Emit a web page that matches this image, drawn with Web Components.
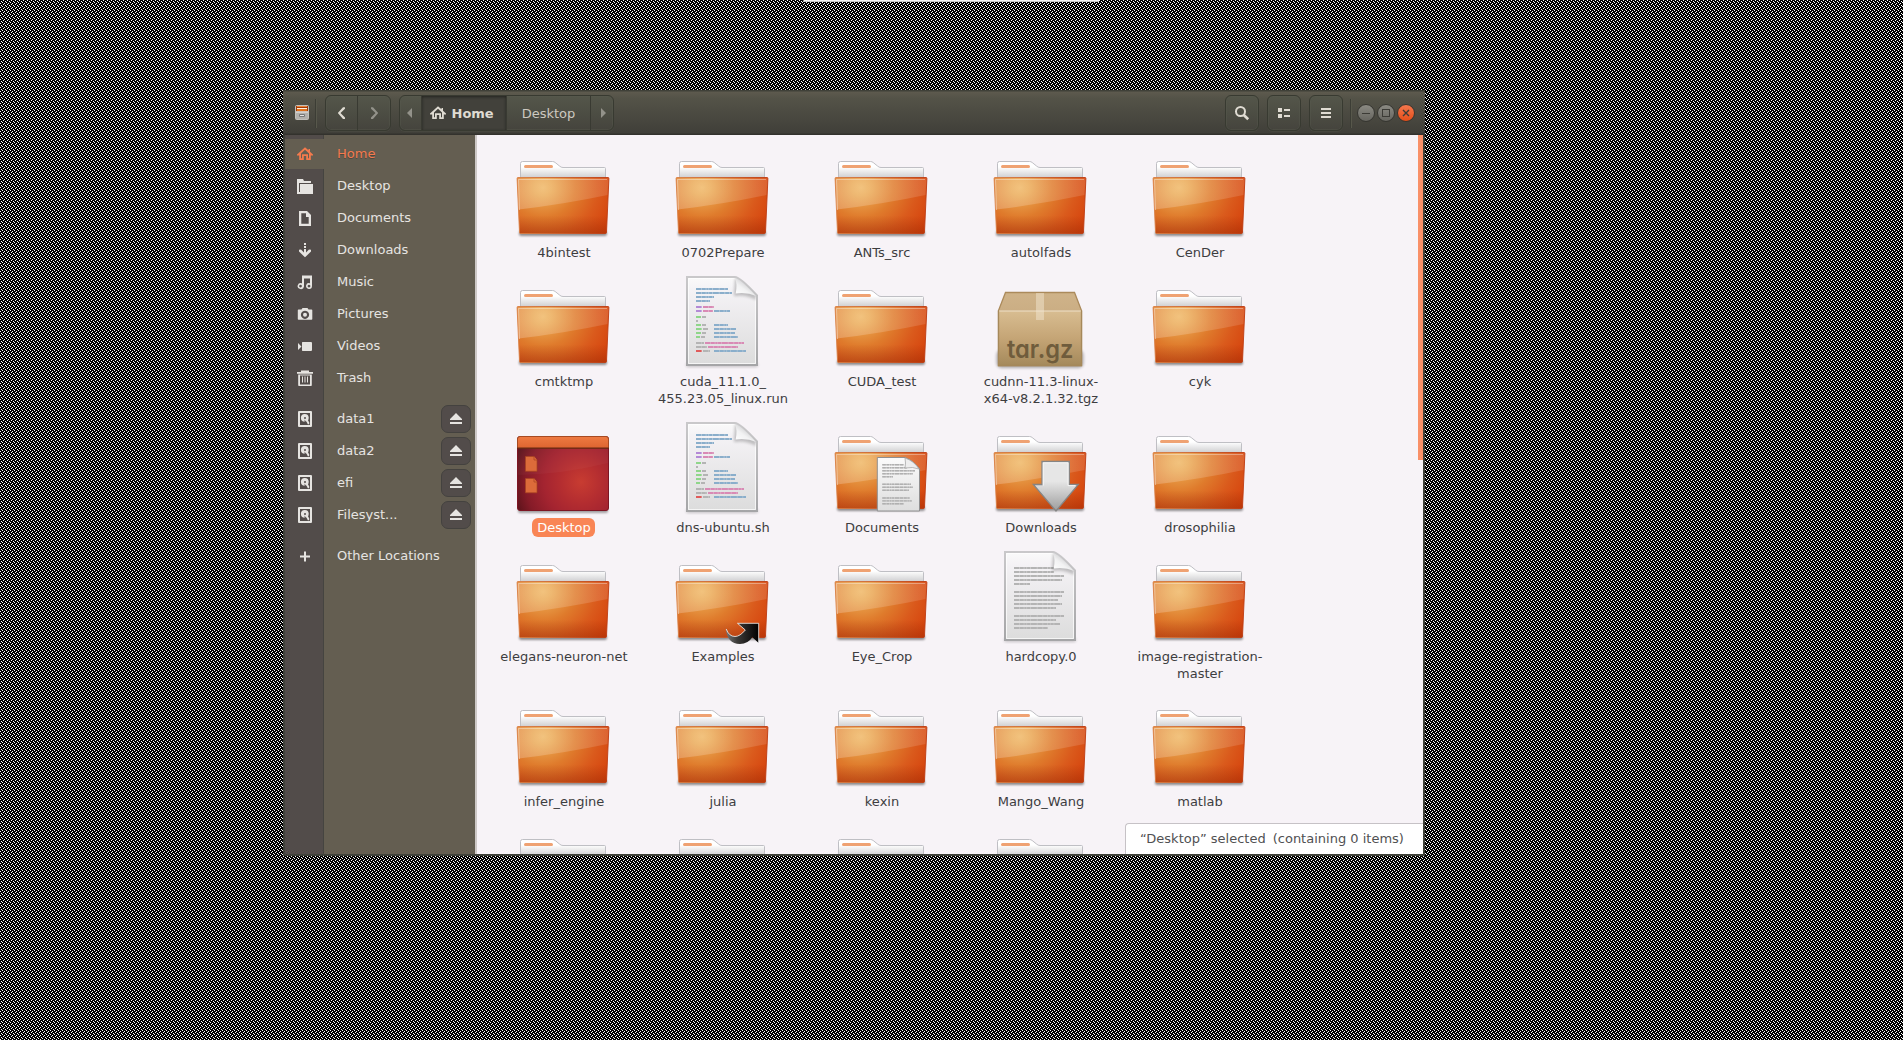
<!DOCTYPE html>
<html lang="en">
<head>
<meta charset="utf-8">
<title>Home</title>
<style>
html,body{margin:0;height:100%;overflow:hidden;background:#000}
body{font:13px/17px "DejaVu Sans",sans-serif}
</style>
</head>
<body>
<x-desktop>
  <file-window>
    <header-bar slot="header"></header-bar>
    <side-bar slot="side">
      <side-row icon="home" selected>Home</side-row>
      <side-row icon="folder">Desktop</side-row>
      <side-row icon="doc">Documents</side-row>
      <side-row icon="down">Downloads</side-row>
      <side-row icon="music">Music</side-row>
      <side-row icon="camera">Pictures</side-row>
      <side-row icon="video">Videos</side-row>
      <side-row icon="trash">Trash</side-row>
      <side-row icon="disk" gap eject>data1</side-row>
      <side-row icon="disk" eject>data2</side-row>
      <side-row icon="disk" eject>efi</side-row>
      <side-row icon="disk" eject>Filesyst...</side-row>
      <side-row icon="plus" gap>Other Locations</side-row>
    </side-bar>
    <file-grid>
      <file-item>4bintest</file-item>
      <file-item>0702Prepare</file-item>
      <file-item>ANTs_src</file-item>
      <file-item>autolfads</file-item>
      <file-item>CenDer</file-item>
      <file-item>cmtktmp</file-item>
      <file-item kind="code">cuda_11.1.0_<br>455.23.05_linux.run</file-item>
      <file-item>CUDA_test</file-item>
      <file-item kind="tar">cudnn-11.3-linux-<br>x64-v8.2.1.32.tgz</file-item>
      <file-item>cyk</file-item>
      <file-item kind="desktop" selected>Desktop</file-item>
      <file-item kind="code">dns-ubuntu.sh</file-item>
      <file-item kind="documents">Documents</file-item>
      <file-item kind="downloads">Downloads</file-item>
      <file-item>drosophilia</file-item>
      <file-item>elegans-neuron-net</file-item>
      <file-item kind="link">Examples</file-item>
      <file-item>Eye_Crop</file-item>
      <file-item kind="text">hardcopy.0</file-item>
      <file-item>image-registration-<br>master</file-item>
      <file-item>infer_engine</file-item>
      <file-item>julia</file-item>
      <file-item>kexin</file-item>
      <file-item>Mango_Wang</file-item>
      <file-item>matlab</file-item>
      <file-item></file-item>
      <file-item></file-item>
      <file-item></file-item>
      <file-item></file-item>
    </file-grid>
    <status-tip slot="status"><span>“Desktop” selected</span><span>(containing 0 items)</span></status-tip>
  </file-window>
</x-desktop>

<script>
const define = (name, html) => customElements.define(name, class extends HTMLElement {
  constructor() { super(); this.attachShadow({mode: 'open'}); }
  connectedCallback() {
    this.shadowRoot.innerHTML = typeof html === 'function' ? html(this) : html;
  }
});

const GLYPHS = {
  home: '<path d="M8 1.200 0 8.400V9.600h2.200v4.500h4.600v-4h2.400v4h4.600V9.600H16V8.400L13 5.700V3.100h-1.500v1.200zM8 3.800l4 3.600v4.900h-1V8.200H5v4.100H4V7.400z" fill-rule="evenodd"/>',
  folder: '<path d="M0 1h6l1 2h7v2H2v9h1V6h13v10H0z"/>',
  doc: '<path d="M2 1h8l4 4v11H2zM4.300 3.200v10.600h7.400V7H9V3.200z" fill-rule="evenodd"/>',
  down: '<path d="M7 1h2v2H7zM7 4h2v2H7zM7 7h2v3.600l3-3 2 .2V9.600l-6 5.700-6-5.700V7.800l2-.2 3 3z"/>',
  music: '<path d="M5 1.500h10v10.500a3 2.900 0 1 1-2-2.700V4.500H7v8a3.200 3 0 1 1-2-3.200zM3.500 10.700a1.400 1.400 0 1 0 .01 0zM12 10.700a1.400 1.400 0 1 0 .01 0z" fill-rule="evenodd"/>',
  camera: '<path d="M1.500 3.500H4.500L5.500 2h5l1 1.500H14.500q.8 0 .8.800V13q0 .8-.8.800h-13Q.8 13.800.8 13V4.300q0-.8.700-.8zM8 4.700a4.100 4.100 0 1 0 .01 0z" fill-rule="evenodd"/><circle cx="8" cy="8.800" r="2"/>',
  video: '<path d="M5.500 4H14q1 0 1 1v7q0 1-1 1H5.500Q5 13 5 12V5q0-1 .5-1zM1 5v7l3.500-3.500z"/>',
  trash: '<path d="M4 .5h8v1.500h4v1.800H0V2h4zM1.200 4.500h13.600V15q0 1.200-1.200 1.200H2.400Q1.200 16.200 1.200 15zM3 5.500v8.900h10V5.500z" fill-rule="evenodd"/><path d="M5 6.500h1v6H5zM7.500 6.500h1v6h-1zM10 6.500h1v6h-1z"/>',
  disk: '<path d="M2 0h12q1 0 1 1v14q0 1-1 1H2q-1 0-1-1V1q0-1 1-1zM3 2v12h10V2z" fill-rule="evenodd"/><circle cx="7.800" cy="6.800" r="3.900"/><path d="M7.600 8.500v3.200l3 1.800z" fill="#524c4a"/><circle cx="8" cy="7" r="1" fill="#524c4a"/><path d="M8.300 8.300l1.600-1 2.300 4.200v1.800h-1.400z"/>',
  plus: '<path d="M7 3.500h2v4h4v2H9v4H7v-4H3v-2h4z"/>',
  eject: '<path d="M8 2l6 6v1H2V8zM2 11h12v2H2z"/>',
  back: '<path d="M9 2.200h2v1.500L6.500 8l4.500 4.400v1.500H9L3.800 8z"/>',
  next: '<path d="M7 2.200H5v1.500L9.500 8 5 12.400v1.500h2L12.200 8z"/>',
  tril: '<path d="M10 3v10L5 8z"/>',
  trir: '<path d="M6 3v10l5-5z"/>',
  search: '<circle cx="6.500" cy="6.500" r="4.500" fill="none" stroke="currentColor" stroke-width="2"/><path d="M9.500 9.700l4.700 4.600" fill="none" stroke="currentColor" stroke-width="2.600"/>',
  list: '<path d="M2 3h4v4H2zM2 9h4v4H2zM8 4h6v2H8zM8 10h6v2H8z"/>',
  menu: '<path d="M3 3h10v2H3zM3 7h10v2H3zM3 11h10v2H3z"/>'
};
define('g-icon', el => `<style>:host{display:block;width:16px;height:16px}svg{display:block}</style>
  <svg width="16" height="16" viewBox="0 0 16 16" fill="currentColor">${GLYPHS[el.getAttribute('name')]}</svg>`);

define('x-desktop', `<style>
  :host{display:block;position:relative;width:1903px;height:1040px;overflow:hidden;background:#000}
  .weave{position:absolute;inset:0;display:block}
  .strip{position:absolute;left:803px;top:0;width:296px;height:2px;background:#f4f4f4;box-sizing:border-box;border-left:1px solid #999;border-bottom:1px solid #c8c8c8}
  ::slotted(file-window){position:absolute;left:283px;top:90px}
  </style>
  <svg class="weave" width="1903" height="1040" shape-rendering="crispEdges"><defs>
    <pattern id="w" width="4" height="4" patternUnits="userSpaceOnUse"><path fill="#fff" d="M3 0h1v1h-1zM1 1h1v1h-1zM2 2h1v1h-1zM0 3h1v1h-1z"/></pattern></defs>
    <rect width="1903" height="1040" fill="url(#w)"/></svg>
  <div class="strip"></div><slot></slot>`);

define('file-window', `<style>
  :host{display:flex;flex-direction:column;width:1142px;height:766px;box-sizing:border-box;background:#40423a}
  .body{display:flex;height:719px;margin:0 2px 2px}
  .view{position:relative;flex:1;overflow:hidden;background:#f7f3f7}
  .scroll{position:absolute;right:0;top:0;width:5px;height:325px;background:#f99068}
  ::slotted(status-tip){position:absolute;right:0;bottom:0}
  </style><slot name="header"></slot>
  <div class="body"><slot name="side"></slot>
    <div class="view"><slot></slot><div class="scroll"></div><slot name="status"></slot></div></div>`);

define('header-bar', `<style>
  :host{display:flex;align-items:center;height:45px;box-sizing:border-box;padding:1px 10px 0 12px;
    background:linear-gradient(#3f4038 0,#3f4038 1px,#5d5a4e 2px,#545348 8px,#403f39 43px,#33322d 44px);color:#dfdbd2}
  .app{display:block;width:14px;height:15px;margin-bottom:1px}
  .sep{width:1px;height:29px;background:#3c3d35;border-right:1px solid #57574b}
  .group{display:flex;height:36px;box-sizing:border-box;border:1px solid #383a31;border-radius:6px;overflow:hidden;
    background:linear-gradient(#54564a,#45443d);box-shadow:0 1px #55564a55, inset 0 0 0 1px #5a5c5055}
  .group>*{display:flex;align-items:center;justify-content:center;box-sizing:border-box}
  .group>*+*{border-left:1px solid #393a32}
  .dim{color:#93928a}
  .group>.home{width:85px;padding-left:8px;gap:5.500px;justify-content:flex-start;font-weight:bold;background:#42413b;box-shadow:inset 0 1px 3px #23231f}
  .win{display:flex;margin-left:5px}
  .win svg{display:block}
  </style>
  <svg class="app" viewBox="0 0 14 15"><rect x=".5" y=".5" width="13" height="14" rx="1" fill="#a9a7a2" stroke="#c2c0bb"/><rect x="1" y="1" width="12" height="5.500" fill="#9c3a0c"/><path d="M2 1.500h10" stroke="#f08030"/><path d="M2 3.500h10" stroke="#fff3e0"/><path d="M2 5h10" stroke="#ff8a20" stroke-width="1.400"/><rect x="1" y="6.500" width="12" height="7.500" fill="#b2b0ac"/><path d="M1 7h12" stroke="#efeeec"/><path d="M4.500 9.500h5v2h-5z" fill="#e4e4e4" stroke="#777"/></svg>
  <div class="sep" style="margin-left:6px"></div>
  <div class="group" style="margin-left:8px"><div style="width:31px"><g-icon name="back"></g-icon></div><div class="dim" style="width:33px"><g-icon name="next"></g-icon></div></div>
  <div class="group" style="margin-left:8px">
    <div class="dim" style="width:21px;padding-right:1px"><g-icon name="tril"></g-icon></div>
    <div class="home"><g-icon name="home"></g-icon><span>Home</span></div>
    <div style="width:84px;color:#cdc9c0">Desktop</div>
    <div class="dim" style="width:23px;padding-left:2px"><g-icon name="trir"></g-icon></div></div>
  <div style="flex:1"></div>
  <div class="group"><div style="width:32px"><g-icon name="search"></g-icon></div></div>
  <div class="group" style="margin-left:8px"><div style="width:32px"><g-icon name="list"></g-icon></div></div>
  <div class="group" style="margin-left:8px"><div style="width:32px"><g-icon name="menu"></g-icon></div></div>
  <div class="sep" style="margin-left:7px"></div>
  <div class="win"><svg width="58" height="18" viewBox="0 0 58 18"><defs>
    <linearGradient id="g" x2="0" y2="1"><stop stop-color="#8c8b84"/><stop offset="1" stop-color="#65645e"/></linearGradient>
    <linearGradient id="o" x2="0" y2="1"><stop stop-color="#f5794f"/><stop offset="1" stop-color="#e24d18"/></linearGradient></defs>
    <g stroke="#34342f"><circle cx="9" cy="9" r="8.500" fill="url(#g)"/><circle cx="29" cy="9" r="8.500" fill="url(#g)"/><circle cx="49" cy="9" r="8.500" fill="url(#o)"/></g>
    <g stroke="#3c3b36" fill="none"><path d="M5 9.500h8"/><rect x="25.500" y="5.500" width="7" height="7"/><path d="M46 6l6 6M52 6l-6 6" stroke-width="1.400"/></g></svg></div>`);

define('side-bar', `<style>
  :host{display:flex;flex-direction:column;flex:none;width:190px;padding-top:3px;box-sizing:content-box;border-right:2px solid #cdc8c6;
    background:linear-gradient(90deg,#524c4a 38px,#454440 38px,#454440 39px,#645e51 39px)}
  </style><slot></slot>`);

define('side-row', el => `<style>
  :host{display:flex;align-items:center;height:32px;color:#e6e4e1}
  :host([gap]){margin-top:9px}
  :host([selected]){color:#f47a4d}
  .ic{display:flex;align-items:center;justify-content:center;width:40px;height:30px}
  :host([selected]) .ic{background:#645e51}
  .t{flex:1;padding:0 0 1px 12px;white-space:nowrap}
  :host([selected]) .t{text-shadow:0 1px #4d473d}
  .ej{display:flex;align-items:center;justify-content:center;width:30px;height:28px;box-sizing:border-box;border:1px solid #44423f;border-radius:7px;background:#524c4a;margin-right:4px}
  </style><div class="ic"><g-icon name="${el.getAttribute('icon')}"></g-icon></div><div class="t"><slot></slot></div>
  ${el.hasAttribute('eject') ? '<div class="ej"><g-icon name="eject"></g-icon></div>' : ''}`);

define('file-grid', `<style>
  :host{display:grid;grid-template-columns:repeat(5,159px);grid-template-rows:129px 146px 129px 145px 129px 129px;padding:9px 0 0 7px;align-items:start}
  </style><slot></slot>`);

const FRONT = 'M3 33.500H93Q94 33.500 93.900 34.500L91.500 88.500Q91.400 89.500 90.400 89.500H5.600Q4.600 89.500 4.500 88.500L2.100 34.500Q2 33.500 3 33.500z';
const FOLDER = `<defs>
  <linearGradient id="bk" x2="0" y2="1"><stop offset=".3" stop-color="#fff"/><stop offset="1" stop-color="#c4c4c6"/></linearGradient>
  <radialGradient id="fr" gradientUnits="userSpaceOnUse" cx="28" cy="44" r="78" gradientTransform="translate(0 4) scale(1 .9)"><stop stop-color="#efb45f"/><stop offset=".12" stop-color="#eaa750"/><stop offset=".42" stop-color="#df7b2c"/><stop offset=".7" stop-color="#da5a1c"/><stop offset="1" stop-color="#d5400b"/></radialGradient>
  <linearGradient id="sh" x2="0" y2="1"><stop offset=".68" stop-color="#8a2a08" stop-opacity="0"/><stop offset="1" stop-color="#8a2a08" stop-opacity=".36"/></linearGradient>
  <linearGradient id="gl" x2="1" y2="0"><stop stop-color="#fff" stop-opacity=".22"/><stop offset="1" stop-color="#fff" stop-opacity=".12"/></linearGradient>
  <linearGradient id="ed" x2="1" y2="0"><stop stop-color="#d98046"/><stop offset="1" stop-color="#bd3a10"/></linearGradient>
  <filter id="bl" x="-10%" width="120%" y="-100%" height="300%"><feGaussianBlur stdDeviation="1.100"/></filter></defs>
  <rect x="4" y="87" width="88" height="5" rx="2" fill="#000" opacity=".42" filter="url(#bl)"/>
  <path d="M5.500 36V19.500Q5.500 17.500 7.500 17.500H37.500Q39 17.500 40.200 18.500L44.500 22Q46 23.500 48 23.500H89.500Q90.500 23.500 90.500 24.500V36z" fill="url(#bk)" stroke="#bfbfc4"/>
  <rect x="9" y="21" width="29" height="3" rx="1.500" fill="#efa272"/>
  <path d="${FRONT}" fill="url(#fr)"/>
  <path d="${FRONT}" fill="url(#sh)" stroke="url(#ed)" stroke-width=".9"/>
  <path d="M3 34.500H93.300L92.500 51Q50 60 3.800 65.500z" fill="url(#gl)"/>
  <path d="M4.500 66L3.500 35.500H92" fill="none" stroke="#fff" stroke-opacity=".35"/>`;

const rows = (list, w) => list.map(([y, x1, x2, c]) =>
  `<path d="M${x1} ${y}H${x2}" stroke="${c}" stroke-width="${w}" opacity=".5"/><path d="M${x1} ${y}H${x2}" stroke="${c}" stroke-width="${w}" stroke-dasharray="${w * 2.500} .7 ${w * 2} .7 ${w} .7 ${w * 1.500} .7 ${w * 3} .7"/>`).join('');

const page = lines => `<defs>
  <linearGradient id="pg" x2="0" y2="1"><stop stop-color="#fafafa"/><stop offset=".15" stop-color="#f4f2f5"/><stop offset="1" stop-color="#dcdcdc"/></linearGradient>
  <linearGradient id="ps" x2="0" y2="1"><stop stop-color="#c9c8ca"/><stop offset="1" stop-color="#a5a5a7"/></linearGradient>
  <linearGradient id="fd" x1="0" y1="1" x2=".6" y2=".3"><stop stop-color="#fff"/><stop offset=".6" stop-color="#f2f2f3"/><stop offset="1" stop-color="#d0d0d2"/></linearGradient>
  <filter id="pb" x="-30%" width="160%" y="-30%" height="160%"><feGaussianBlur stdDeviation="1.600"/></filter><clipPath id="pc"><path d="M13 4H62L83 23V92H13z"/></clipPath></defs>
  <rect x="12" y="90" width="72" height="4" rx="2" fill="#000" opacity=".2" filter="url(#pb)"/>
  <path d="M13 4H61Q66 4 83 22.500V92H13z" fill="url(#pg)"/>
  <path d="M14.500 5.500H60M81.500 24V90.500H14.500V5.500" stroke="#fff" stroke-opacity=".7" fill="none"/>
  ${lines}
  <path d="M61 5L60 23Q72 21 82 27V22z" fill="#000" opacity=".22" filter="url(#pb)" clip-path="url(#pc)"/>
  <path d="M61 4.500Q63.500 11 61.700 20.500Q73 19 82.500 23Q67 5 61 4.500z" fill="url(#fd)"/>
  <path d="M13 4H61Q66 4 83 22.500V92H13z" fill="none" stroke="url(#ps)" stroke-width="2"/>`;

const B = '#8aaecb', P = '#b48ad6', K = '#d98ab5', G = '#8fd68a', S = '#b4b4b4', R = '#e05b5b';
const CODE = rows([[16,22,54,B],[20,22,58,B],[24,22,40,B],[28,22,36,B],[34,22,28,P],[34,29,40,K],[38,22,28,P],[38,29,39,K],[38,40,56,B],
  [44,22,27,G],[44,28,32,S],[48,22,24,S],[52,22,27,G],[52,28,32,S],[52,40,54,B],[56,22,28,G],[56,29,34,S],[56,40,62,B],
  [60,22,27,G],[60,28,32,S],[60,40,61,B],[64,22,26,G],[64,27,31,S],[64,40,64,B],[70,22,30,S],[70,31,70,K],[74,22,33,S],[74,34,64,K],
  [78,22,28,R],[78,29,36,S],[78,40,72,B]], 2);
const TEXT = rows([[20,62],[24,62],[28,72],[32,70],[36,38],[44,72],[48,70],[52,66],[56,70],[60,64],[68,72],[72,64],[76,68],[80,56]].map(([y, x]) => [y, 22, x, S]), 2);

const ART = {
  folder: FOLDER,
  code: page(CODE),
  text: page(TEXT),
  documents: FOLDER + `<defs><linearGradient id="dg" x2="0" y2="1"><stop stop-color="#fbfbfb"/><stop offset="1" stop-color="#dedede"/></linearGradient></defs>
    <path d="M44.300 38.500H72Q81 42 86.500 50V92H44.300z" fill="url(#dg)" stroke="#8f8f90"/>
    ${rows([[45.700,71],[48.700,74],[51.700,82],[54.700,80],[57.700,60],[65.300,78],[68.300,80],[71.300,76],[79,77],[81.900,79],[84.800,71]].map(([y, x]) => [y, 49.300, x, '#b0b0b0']), 1.400)}
    <path d="M72 39Q73 44 72 49Q80 47.500 86 50Q81 42 72 39z" fill="#eee" stroke="#a8a8a8" stroke-width=".8"/>`,
  downloads: FOLDER + `<defs><linearGradient id="ag" x2="0" y2="1"><stop offset=".4" stop-color="#e6e6e6"/><stop offset="1" stop-color="#9c9c9c"/></linearGradient></defs>
    <path d="M50 42.500H77.300V65.500H86.300L64 92 41.300 65.500H50z" fill="url(#ag)" stroke="#858585" stroke-width="1.300"/><path d="M51.300 66.600V43.800H76V66.600H83.600" fill="none" stroke="#f4f4f4"/>`,
  link: FOLDER + `<defs><linearGradient id="lk" x2="1" y2="0"><stop stop-color="#777"/><stop offset=".35" stop-color="#3c3a38"/><stop offset="1" stop-color="#000"/></linearGradient></defs>
    <path d="M51.800 80Q53 96 66 96Q74 96 78.300 89.300L84.700 95V75.300H63.500L71.300 82Q66 88.500 61 88.500Q54.500 88 51.800 80z" fill="url(#lk)"/>
    <path d="M52.200 81Q55 88.500 61 88.500Q66 88.500 71.300 82L63.500 75.300H84.700V95" fill="none" stroke="#fff" stroke-opacity=".85" stroke-width=".9"/>`,
  desktop: `<defs><radialGradient id="db" gradientUnits="userSpaceOnUse" cx="66" cy="63" r="74"><stop stop-color="#c83c31"/><stop offset=".28" stop-color="#b42d30"/><stop offset=".5" stop-color="#a42430"/><stop offset=".75" stop-color="#861b28"/><stop offset="1" stop-color="#4d1016"/></radialGradient>
    <linearGradient id="dt" x2="0" y2="1"><stop stop-color="#ee7a42"/><stop offset="1" stop-color="#dd6530"/></linearGradient>
    <filter id="xb" x="-10%" width="120%" y="-100%" height="300%"><feGaussianBlur stdDeviation="1.100"/></filter></defs>
    <rect x="3" y="89" width="90" height="5" rx="2" fill="#000" opacity=".35" filter="url(#xb)"/>
    <rect x="2.500" y="17.500" width="91" height="74" rx="2.500" fill="url(#db)" stroke="#7d1523"/>
    <path d="M3 30H93V44Q50 55 3 56z" fill="#fff" opacity=".03"/>
    <path d="M2.500 29V20q0-2.500 2.500-2.500H91q2.500 0 2.500 2.500V29z" fill="url(#dt)" stroke="#a64a22"/><path d="M2 29.200H94" stroke="#5f2410"/>
    <g fill="#dc6b3a" stroke="#a8431f" stroke-width=".7"><path d="M10.500 37.500h8.500l3 3.500v11.300H10.500z"/><path d="M19 37.500v3.500h3"/><path d="M10.500 59.500h8.500l3 3.500v10.800H10.500z"/><path d="M19 59.500v3.500h3"/></g>`,
  tar: `<defs><linearGradient id="tf" x2="0" y2="1"><stop stop-color="#d8bd91"/><stop offset=".5" stop-color="#c5a576"/><stop offset="1" stop-color="#a58a5c"/></linearGradient>
    <linearGradient id="tt" x2="0" y2="1"><stop stop-color="#cfb389"/><stop offset="1" stop-color="#bf9f76"/></linearGradient>
    <filter id="tb" x="-20%" width="140%" y="-50%" height="200%"><feGaussianBlur stdDeviation="1.500"/></filter></defs>
    <rect x="4.500" y="77" width="87" height="18" rx="5" fill="#000" opacity=".3" filter="url(#tb)"/>
    <path d="M13.500 19.500H82.500L89.500 37.500V92.500H6.500V37.500z" fill="url(#tt)" stroke="#ab8a5b" stroke-width="1.300"/>
    <path d="M7 38H89V92H7z" fill="url(#tf)"/><path d="M7 38H89" stroke="#eee0c8" stroke-width="1.200"/>
    <path d="M6.500 37.500V92.500H89.500V37.500" fill="none" stroke="#a5885a" stroke-width="1.300"/>
    <path d="M44 20h8v27h-8z" fill="#f2e6d0" opacity=".5"/>
    <text x="15" y="85" textLength="66.500" lengthAdjust="spacingAndGlyphs" font-family="Inter,sans-serif" font-weight="600" font-size="25" fill="#6f5c3c" style="font-feature-settings:'cv11'">tar.gz</text>`
};
define('file-item', el => `<style>
  :host{display:flex;flex-direction:column;align-items:center;color:#3d3d3f;text-align:center}
  svg{display:block;margin:0 1px 3px 0;overflow:visible}
  .l{padding:1px 4px 0 5px;border-radius:6px;min-height:17px;white-space:nowrap}
  :host([selected]) .l{background:#f98555;color:#fff;padding-bottom:1px}
  </style><svg width="96" height="96" viewBox="0 0 96 96">${ART[el.getAttribute('kind') || 'folder']}</svg><div class="l"><slot></slot></div>`);

define('status-tip', `<style>
  :host{display:flex;gap:7px;box-sizing:border-box;width:298px;height:31px;padding:6px 0 0 14px;background:#fff;border:solid #c6c2c6;border-width:1px 0 0 1px;border-top-left-radius:4px;color:#505052;white-space:nowrap}
  </style><slot></slot>`);
</script>
</body>
</html>
